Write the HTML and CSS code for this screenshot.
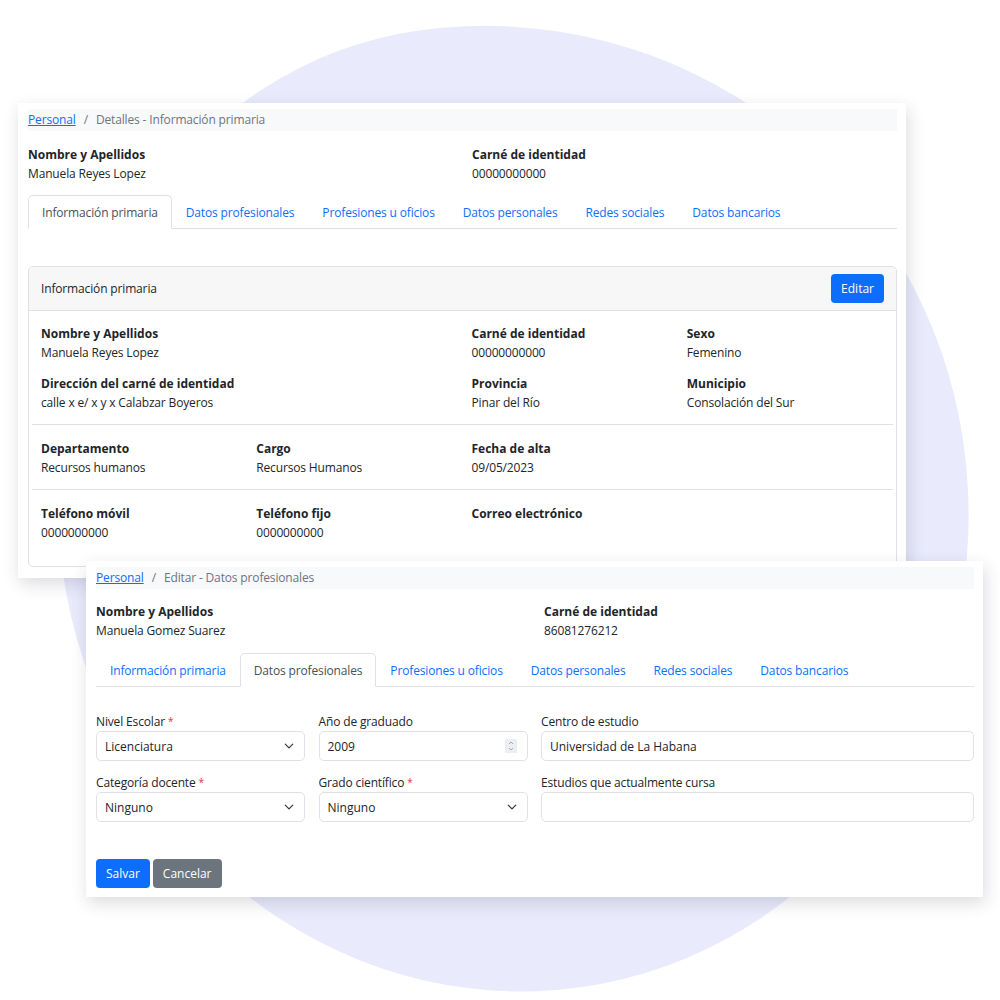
FILE: index.html
```html
<!DOCTYPE html>
<html lang="es">
<head>
    <meta charset="UTF-8">
    <meta name="viewport" content="width=device-width, initial-scale=1.0">
    <title>Personal</title>
    <link rel="stylesheet" href="styles.css">
</head>
<body>
<div class="stage">
    <div class="blob"></div>

    <!-- Detalles -->
    <section class="window window-details">
        <nav class="crumbs">
            <a href="#">Personal</a><span class="sep">/</span><span>Detalles - Información primaria</span>
        </nav>
        <div class="summary">
            <div class="field">
                <div class="label">Nombre y Apellidos</div>
                <div class="value">Manuela Reyes Lopez</div>
            </div>
            <div class="field">
                <div class="label">Carné de identidad</div>
                <div class="value">00000000000</div>
            </div>
        </div>
        <ul class="tabs">
            <li class="tab active">Información primaria</li>
            <li class="tab">Datos profesionales</li>
            <li class="tab">Profesiones u oficios</li>
            <li class="tab">Datos personales</li>
            <li class="tab">Redes sociales</li>
            <li class="tab">Datos bancarios</li>
        </ul>
        <div class="panel">
            <div class="panel-head">
                <span>Información primaria</span>
                <button class="btn btn-primary">Editar</button>
            </div>
            <div class="panel-body">
                <div class="grid4">
                    <div class="field span2">
                        <div class="label">Nombre y Apellidos</div>
                        <div class="value">Manuela Reyes Lopez</div>
                    </div>
                    <div class="field">
                        <div class="label">Carné de identidad</div>
                        <div class="value">00000000000</div>
                    </div>
                    <div class="field">
                        <div class="label">Sexo</div>
                        <div class="value">Femenino</div>
                    </div>
                    <div class="field span2">
                        <div class="label">Dirección del carné de identidad</div>
                        <div class="value">calle x e/ x y x Calabzar Boyeros</div>
                    </div>
                    <div class="field">
                        <div class="label">Provincia</div>
                        <div class="value">Pinar del Río</div>
                    </div>
                    <div class="field">
                        <div class="label">Municipio</div>
                        <div class="value">Consolación del Sur</div>
                    </div>
                </div>
                <hr>
                <div class="grid4">
                    <div class="field">
                        <div class="label">Departamento</div>
                        <div class="value">Recursos humanos</div>
                    </div>
                    <div class="field">
                        <div class="label">Cargo</div>
                        <div class="value">Recursos Humanos</div>
                    </div>
                    <div class="field">
                        <div class="label">Fecha de alta</div>
                        <div class="value">09/05/2023</div>
                    </div>
                </div>
                <hr>
                <div class="grid4">
                    <div class="field">
                        <div class="label">Teléfono móvil</div>
                        <div class="value">0000000000</div>
                    </div>
                    <div class="field">
                        <div class="label">Teléfono fijo</div>
                        <div class="value">0000000000</div>
                    </div>
                    <div class="field">
                        <div class="label">Correo electrónico</div>
                        <div class="value">&nbsp;</div>
                    </div>
                </div>
            </div>
        </div>
    </section>

    <!-- Editar -->
    <section class="window window-edit">
        <nav class="crumbs">
            <a href="#">Personal</a><span class="sep">/</span><span>Editar - Datos profesionales</span>
        </nav>
        <div class="summary">
            <div class="field">
                <div class="label">Nombre y Apellidos</div>
                <div class="value">Manuela Gomez Suarez</div>
            </div>
            <div class="field">
                <div class="label">Carné de identidad</div>
                <div class="value">86081276212</div>
            </div>
        </div>
        <ul class="tabs">
            <li class="tab">Información primaria</li>
            <li class="tab active">Datos profesionales</li>
            <li class="tab">Profesiones u oficios</li>
            <li class="tab">Datos personales</li>
            <li class="tab">Redes sociales</li>
            <li class="tab">Datos bancarios</li>
        </ul>
        <form class="form-grid">
            <div class="form-field">
                <label>Nivel Escolar <span class="req">*</span></label>
                <div class="control-wrap">
                    <select class="control"><option>Licenciatura</option></select>
                    <svg class="chevron" viewBox="0 0 16 16"><path d="M2 5l6 6 6-6" fill="none" stroke="#343a40" stroke-width="2" stroke-linecap="round" stroke-linejoin="round"/></svg>
                </div>
            </div>
            <div class="form-field">
                <label>Año de graduado</label>
                <div class="control-wrap">
                    <input class="control" type="text" value="2009">
                    <svg class="spinner" viewBox="0 0 12 14"><rect width="12" height="14" fill="#eceef1"/><path d="M4 5l2-2 2 2M4 9l2 2 2-2" fill="none" stroke="#9aa0a6" stroke-width="0.9"/></svg>
                </div>
            </div>
            <div class="form-field">
                <label>Centro de estudio</label>
                <input class="control" type="text" value="Universidad de La Habana">
            </div>
            <div class="form-field">
                <label>Categoría docente <span class="req">*</span></label>
                <div class="control-wrap">
                    <select class="control"><option>Ninguno</option></select>
                    <svg class="chevron" viewBox="0 0 16 16"><path d="M2 5l6 6 6-6" fill="none" stroke="#343a40" stroke-width="2" stroke-linecap="round" stroke-linejoin="round"/></svg>
                </div>
            </div>
            <div class="form-field">
                <label>Grado científico <span class="req">*</span></label>
                <div class="control-wrap">
                    <select class="control"><option>Ninguno</option></select>
                    <svg class="chevron" viewBox="0 0 16 16"><path d="M2 5l6 6 6-6" fill="none" stroke="#343a40" stroke-width="2" stroke-linecap="round" stroke-linejoin="round"/></svg>
                </div>
            </div>
            <div class="form-field">
                <label>Estudios que actualmente cursa</label>
                <input class="control" type="text" value="">
            </div>
        </form>
        <div class="actions">
            <button class="btn btn-primary">Salvar</button>
            <button class="btn btn-secondary">Cancelar</button>
        </div>
    </section>
</div>
</body>
</html>
```

FILE: styles.css
```css
body {
    margin: 0;
    font-family: "Open Sans", "Noto Sans", sans-serif;
    font-size: 12px;
    line-height: 19px;
    letter-spacing: -0.15px;
    color: #212529;
}

.stage {
    position: relative;
    width: 1000px;
    height: 1000px;
    overflow: hidden;
    background-color: #fff;
}

.blob {
    position: absolute;
    left: 58px;
    top: 22px;
    width: 910px;
    height: 970px;
    border-radius: 47% 53% 50% 50% / 50% 50% 50% 50%;
    background-color: #e9ebfc;
    transform: rotate(-8deg);
}

.window {
    position: absolute;
    box-sizing: border-box;
    padding: 6px 9px 0 10px;
    background-color: #fff;
    box-shadow: 2px 6px 16px rgba(40, 40, 70, 0.16);
}

.window-details {
    left: 18px;
    top: 103px;
    width: 888px;
    height: 475px;
}

.window-edit {
    left: 86px;
    top: 561px;
    width: 897px;
    height: 336px;
}

.crumbs {
    display: flex;
    height: 22px;
    line-height: 22px;
    background-color: #f8f9fa;
    color: #6c757d;
}

.crumbs a {
    color: #0d6efd;
    text-decoration: underline;
}

.crumbs .sep {
    padding: 0 8px;
}

.summary {
    display: grid;
    grid-template-columns: 444px 1fr;
    margin-top: 14px;
}

.window-edit .summary {
    grid-template-columns: 448px 1fr;
    margin-top: 13px;
}

.label {
    font-weight: 700;
    letter-spacing: 0;
}

.tabs {
    display: flex;
    list-style: none;
    margin: 12px 0 0;
    padding: 0;
    border-bottom: 1px solid #dee2e6;
}

.window-edit .tabs {
    margin-top: 13px;
}

.tab {
    padding: 7px 13px 6px;
    margin-bottom: -1px;
    color: #0d6efd;
    border: 1px solid transparent;
    border-radius: 5px 5px 0 0;
}

.tab.active {
    color: #495057;
    background-color: #fff;
    border-color: #dee2e6 #dee2e6 #fff;
}

.panel {
    margin-top: 37px;
    border: 1px solid #dee2e6;
    border-radius: 5px;
}

.panel-head {
    display: flex;
    justify-content: space-between;
    align-items: center;
    padding: 7px 12px;
    background-color: #f7f7f7;
    border-bottom: 1px solid #dee2e6;
    border-radius: 5px 5px 0 0;
}

.panel-body {
    padding: 13px 3px 12px;
}

.panel-body hr {
    margin: 0 0 14px;
    border: 0;
    border-top: 1px solid #dee2e6;
}

.grid4 {
    display: grid;
    grid-template-columns: repeat(4, 1fr);
}

.grid4 .field {
    padding: 0 9px;
    margin-bottom: 12px;
}

.span2 {
    grid-column: span 2;
}

.btn {
    height: 29px;
    padding: 0 10px;
    border: none;
    border-radius: 4px;
    font: inherit;
    color: #fff;
    cursor: pointer;
}

.btn-primary {
    background-color: #0d6efd;
}

.btn-secondary {
    background-color: #6c757d;
}

.form-grid {
    display: grid;
    grid-template-columns: 209px 209px 1fr;
    column-gap: 13.5px;
    row-gap: 12px;
    margin: 25px 0 0;
}

.form-field label {
    display: block;
}

.req {
    color: #dc3545;
    font-size: 10px;
    vertical-align: top;
}

.control-wrap {
    position: relative;
}

.control {
    display: block;
    box-sizing: border-box;
    width: 100%;
    height: 30px;
    padding: 0 8px;
    border: 1px solid #dee2e6;
    border-radius: 5px;
    background-color: #fff;
    font: inherit;
    color: #212529;
    appearance: none;
    -webkit-appearance: none;
}

.chevron {
    position: absolute;
    right: 11px;
    top: 10px;
    width: 10px;
    height: 10px;
}

.spinner {
    position: absolute;
    right: 11px;
    top: 8px;
    width: 12px;
    height: 14px;
}

.actions {
    display: flex;
    gap: 3px;
    margin-top: 37px;
}
```
